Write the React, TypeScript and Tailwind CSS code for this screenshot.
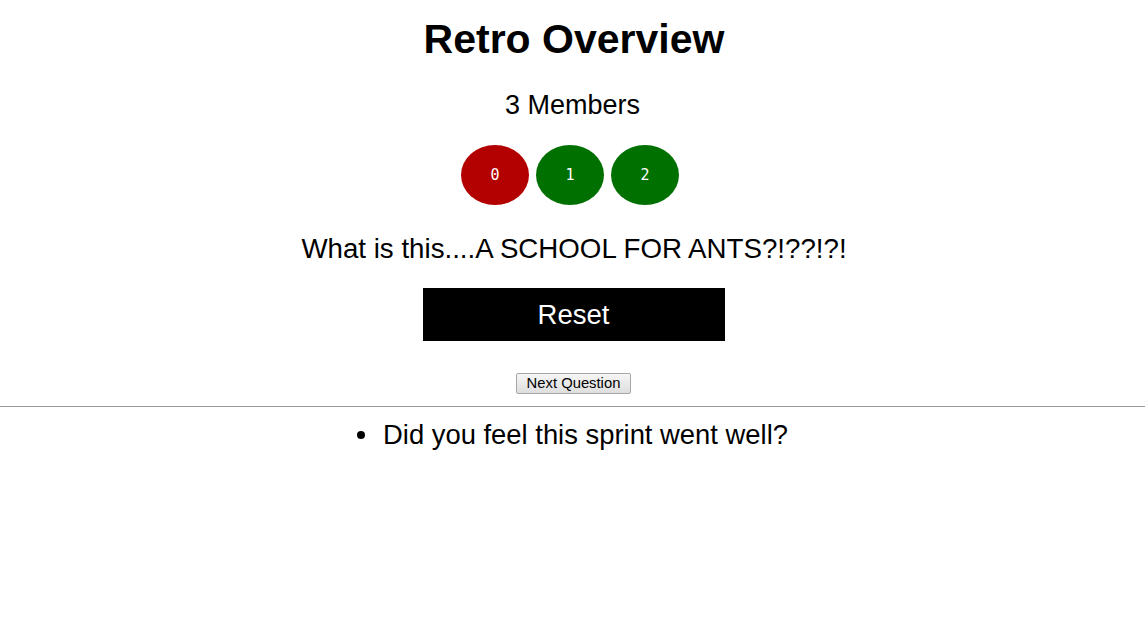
import React, { useState } from "react";

const members = [
  { id: 0, done: false },
  { id: 1, done: true },
  { id: 2, done: true },
];

const questions = ["Did you feel this sprint went well?"];

const App = () => {
  const [members_] = useState(members);

  return (
    <div className="min-h-screen bg-white text-black font-['Liberation_Sans',Arial,sans-serif]">
      <div className="flex flex-col items-center text-center">
        <h1 className="mt-[16px] ml-[3px] text-[41px] leading-[46px] font-bold">Retro Overview</h1>
        <h3 className="mt-[27px] text-[27px] leading-[32px]">{members_.length} Members</h3>
        <div className="mt-[24px] mr-[5px] flex gap-[7px]">
          {members_.map((m) => (
            <div
              key={m.id}
              className={
                m.done
                  ? "w-[68px] h-[60px] rounded-[50%] bg-[#007000] flex items-center justify-center text-white text-[15px] font-['DejaVu_Sans_Mono',monospace]"
                  : "w-[68px] h-[60px] rounded-[50%] bg-[#b30000] flex items-center justify-center text-white text-[15px] font-['DejaVu_Sans_Mono',monospace]"
              }
            >
              {m.id}
            </div>
          ))}
        </div>
        <p className="mt-[28px] ml-[3px] text-[27.7px] leading-[32px]">What is this....A SCHOOL FOR ANTS?!??!?!</p>
        <button className="mt-[23px] ml-[2px] w-[302px] h-[53px] bg-black text-white text-[27.5px]">Reset</button>
        <button className="mt-[32px] ml-[2px] h-[21px] px-[9.5px] border border-[#a6a6a6] rounded-[2px] bg-gradient-to-b from-[#f6f6f6] to-[#dedede] text-[14.8px] leading-[19px]">
          Next Question
        </button>
      </div>
      <hr className="mt-[12px] border-t border-[#9a9a9a]" />
      <ul className="mt-[12px] text-[27.4px] leading-[32px]">
        {questions.map((q) => (
          <li key={q} className="flex items-center justify-center gap-[18px]">
            <span className="w-[8px] h-[8px] rounded-full bg-black" />
            <span>{q}</span>
          </li>
        ))}
      </ul>
    </div>
  );
};

export default App;
